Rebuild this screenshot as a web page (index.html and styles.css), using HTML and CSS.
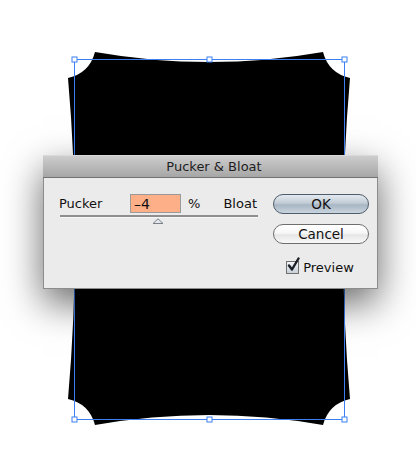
FILE: index.html
```html
<!DOCTYPE html>
<html lang="en">
<head>
    <meta charset="UTF-8">
    <meta name="viewport" content="width=device-width, initial-scale=1.0">
    <title>Pucker &amp; Bloat</title>
    <link rel="stylesheet" href="styles.css">
</head>
<body>
    <div class="stage">
        <!-- Forma con pucker aplicado y su caja de selección -->
        <svg class="artwork" width="416" height="476" viewBox="0 0 416 476">
            <path class="shape" d="M95 52 Q209 72 323 52 Q328.6 73.2 350 78 Q336 238.5 350 399 Q328.6 403.8 323 425 Q209 405 95 425 Q89.4 403.8 68 399 Q82 238.5 68 78 Q89.4 73.2 95 52 Z"/>
            <rect class="bbox" x="74.5" y="59.5" width="270" height="360"/>
            <rect class="handle" x="72" y="57" width="5" height="5"/>
            <rect class="handle" x="207" y="57" width="5" height="5"/>
            <rect class="handle" x="342" y="57" width="5" height="5"/>
            <rect class="handle" x="72" y="237" width="5" height="5"/>
            <rect class="handle" x="342" y="237" width="5" height="5"/>
            <rect class="handle" x="72" y="417" width="5" height="5"/>
            <rect class="handle" x="207" y="417" width="5" height="5"/>
            <rect class="handle" x="342" y="417" width="5" height="5"/>
        </svg>

        <div class="dialog">
            <div class="titlebar">Pucker &amp; Bloat</div>
            <div class="dialog-body">
                <div class="controls">
                    <div class="field-row">
                        <span class="label">Pucker</span>
                        <input class="amount" type="text" value="&ndash;4">
                        <span class="unit">%</span>
                        <span class="label-right">Bloat</span>
                    </div>
                    <div class="slider">
                        <span class="track"></span>
                        <svg class="thumb" width="12" height="6" viewBox="0 0 12 6">
                            <path d="M6 0.8 L11 5.5 L1 5.5 Z" fill="#e4e8ee" stroke="#7b8088" stroke-width="1"/>
                        </svg>
                    </div>
                </div>
                <div class="actions">
                    <button class="btn btn-default">OK</button>
                    <button class="btn">Cancel</button>
                    <label class="preview">
                        <span class="checkbox">
                            <svg width="15" height="16" viewBox="0 0 15 16">
                                <path d="M3 8.5 L6 12.5 L12.5 1.5" fill="none" stroke="#1b1f26" stroke-width="2.4" stroke-linecap="round" stroke-linejoin="round"/>
                            </svg>
                        </span>
                        Preview
                    </label>
                </div>
            </div>
        </div>
    </div>
</body>
</html>
```

FILE: styles.css
```css
body {
    margin: 0;
    padding: 0;
    background-color: #fff;
    font-family: "DejaVu Sans", "Lucida Grande", sans-serif;
}

.stage {
    position: relative;
    width: 416px;
    height: 476px;
    overflow: hidden;
}

.artwork {
    position: absolute;
    left: 0;
    top: 0;
}

.shape {
    fill: #000;
}

.bbox {
    fill: none;
    stroke: #3a80f4;
    stroke-width: 1;
}

.handle {
    fill: #fff;
    stroke: #3a80f4;
    stroke-width: 1;
}

.dialog {
    position: absolute;
    left: 43px;
    top: 156px;
    width: 335px;
    height: 133px;
    box-sizing: border-box;
    background-color: #ebebeb;
    border: 1px solid #8c8c8c;
    border-top: none;
    box-shadow: 0 14px 36px rgba(0, 0, 0, 0.6);
    display: flex;
    flex-direction: column;
}

.titlebar {
    height: 21px;
    border-top: 1px solid #d9d9d9;
    border-bottom: 1px solid #727272;
    box-sizing: content-box;
    margin: -1px -1px 0;
    background: linear-gradient(#cdcdcd, #a6a6a6);
    color: #1e1e1e;
    font-size: 13px;
    line-height: 21px;
    text-align: center;
    padding-left: 7px;
}

.dialog-body {
    flex: 1;
    display: flex;
    padding: 16px 8px 0 15px;
}

.controls {
    width: 199px;
}

.field-row {
    display: flex;
    align-items: center;
    height: 19px;
    font-size: 13px;
    color: #111;
}

.label {
    width: 71px;
}

.amount {
    width: 51px;
    height: 19px;
    box-sizing: border-box;
    margin: 0;
    padding: 0 0 0 3px;
    border: 1px solid #9a9a9a;
    background-color: #fdb088;
    font-family: inherit;
    font-size: 14px;
    color: #111;
    outline: none;
}

.unit {
    margin-left: 7px;
}

.label-right {
    margin-left: auto;
    margin-right: 1px;
}

.slider {
    position: relative;
    margin-top: 2px;
    padding-left: 1px;
}

.track {
    display: block;
    height: 2px;
    background-color: #8e8e8e;
    border-bottom: 1px solid #f6f6f6;
}

.thumb {
    display: block;
    margin-left: 92px;
}

.actions {
    margin-left: 15px;
    width: 96px;
    display: flex;
    flex-direction: column;
}

.btn {
    height: 20px;
    margin: 0;
    padding: 0;
    border: 1px solid #6e6e6e;
    border-radius: 10px;
    background: linear-gradient(#ffffff 0%, #f7f7f7 45%, #e6e6e6 55%, #f8f8f8 100%);
    font-family: inherit;
    font-size: 13.5px;
    color: #111;
    line-height: 18px;
}

.btn-default {
    border-color: #4f5c69;
    background: linear-gradient(#e3e9ef 0%, #c2ccd6 45%, #a8b6c4 55%, #c9d4de 100%);
}

.btn + .btn {
    margin-top: 10px;
}

.preview {
    margin-top: 17px;
    display: flex;
    align-items: center;
    justify-content: center;
    font-size: 13px;
    color: #111;
    height: 13px;
    padding-right: 2px;
}

.checkbox {
    position: relative;
    width: 11px;
    height: 11px;
    margin-right: 4px;
    border: 1px solid #707070;
    background: linear-gradient(#f4f6f9, #c9d0d8);
}

.checkbox svg {
    position: absolute;
    left: -1px;
    top: -5px;
}
```
